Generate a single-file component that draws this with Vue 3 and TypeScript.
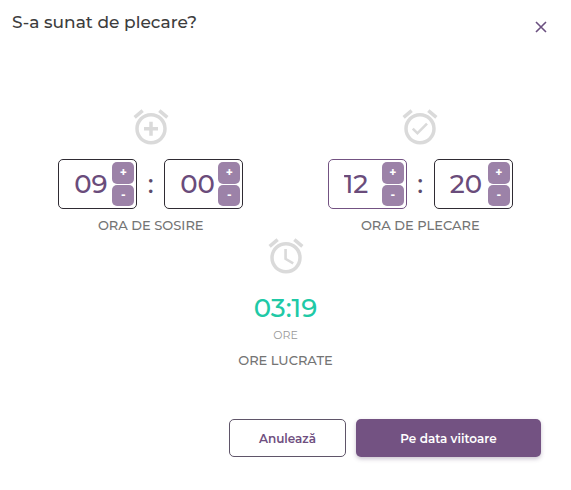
<script setup lang="ts">
import { computed, reactive, ref } from 'vue'

interface TimeGroup {
  id: string
  label: string
  icon: 'add' | 'check'
  fields: { id: string; name: string; value: string; max: number; active: boolean }[]
}

const open = ref(true)

const groups = reactive<TimeGroup[]>([
  {
    id: 'arrival',
    label: 'ORA DE SOSIRE',
    icon: 'add',
    fields: [
      { id: 'arrival-hour', name: 'Ora de sosire, ore', value: '09', max: 24, active: false },
      { id: 'arrival-minute', name: 'Ora de sosire, minute', value: '00', max: 60, active: false },
    ],
  },
  {
    id: 'departure',
    label: 'ORA DE PLECARE',
    icon: 'check',
    fields: [
      { id: 'departure-hour', name: 'Ora de plecare, ore', value: '12', max: 24, active: true },
      { id: 'departure-minute', name: 'Ora de plecare, minute', value: '20', max: 60, active: false },
    ],
  },
])

const arrivalSeconds = 30

const pad = (n: number): string => String(n).padStart(2, '0')

function step(field: TimeGroup['fields'][number], delta: number): void {
  field.value = pad(((Number(field.value) || 0) + delta + field.max) % field.max)
}

function minutesOf(group: TimeGroup): number {
  return (Number(group.fields[0].value) || 0) * 60 + (Number(group.fields[1].value) || 0)
}

const worked = computed(() => {
  const seconds = (minutesOf(groups[1]) - minutesOf(groups[0])) * 60 - arrivalSeconds
  const minutes = Math.max(0, Math.floor(seconds / 60))
  return `${pad(Math.floor(minutes / 60))}:${pad(minutes % 60)}`
})
</script>

<template>
  <form v-if="open" class="dialog" @submit.prevent="open = false">
    <header class="head">
      <h1 class="title">S-a sunat de plecare?</h1>
      <button class="close" type="button" aria-label="Închide" @click="open = false">
        <svg viewBox="0 0 12 12" aria-hidden="true"><path d="M1 1l10 10M11 1L1 11" /></svg>
      </button>
    </header>

    <main class="body">
      <div class="times">
        <section v-for="group in groups" :key="group.id" class="group">
          <svg class="alarm" viewBox="0 0 24 24" aria-hidden="true">
            <path d="M7.88 3.39L6.6 1.86 2 5.71l1.29 1.53 4.59-3.85zM22 5.72l-4.6-3.86-1.29 1.53 4.6 3.86L22 5.72zM12 4c-4.97 0-9 4.03-9 9s4.02 9 9 9a9 9 0 0 0 0-18zm0 16c-3.87 0-7-3.13-7-7s3.13-7 7-7 7 3.13 7 7-3.13 7-7 7z" />
            <path v-if="group.icon === 'add'" d="M13 9h-2v3H8v2h3v3h2v-3h3v-2h-3V9z" />
            <path v-else d="M10.54 14.53L8.41 12.4l-1.06 1.06 3.18 3.18 6-6-1.06-1.06-4.93 4.95z" />
          </svg>
          <div class="fields">
            <template v-for="(field, i) in group.fields" :key="field.id">
              <span v-if="i" class="colon">:</span>
              <div class="field" :class="{ active: field.active }">
                <input
                  :id="field.id"
                  v-model="field.value"
                  class="value"
                  type="text"
                  inputmode="numeric"
                  maxlength="2"
                  :aria-label="field.name"
                />
                <div class="steps">
                  <button type="button" class="step" @click="step(field, 1)">+</button>
                  <button type="button" class="step" @click="step(field, -1)">-</button>
                </div>
              </div>
            </template>
          </div>
          <p class="label">{{ group.label }}</p>
        </section>
      </div>

      <section class="group total">
        <svg class="alarm" viewBox="0 0 24 24" aria-hidden="true">
          <path d="M22 5.72l-4.6-3.86-1.29 1.53 4.6 3.86L22 5.72zM7.88 3.39L6.6 1.86 2 5.71l1.29 1.53 4.59-3.85zM12.5 8H11v6l4.75 2.85.75-1.23-4-2.37V8zM12 4c-4.97 0-9 4.03-9 9s4.02 9 9 9a9 9 0 0 0 0-18zm0 16c-3.87 0-7-3.13-7-7s3.13-7 7-7 7 3.13 7 7-3.13 7-7 7z" />
        </svg>
        <output class="worked">{{ worked }}</output>
        <span class="unit">ORE</span>
        <p class="label">ORE LUCRATE</p>
      </section>
    </main>

    <footer class="foot">
      <button class="btn outline" type="button" @click="open = false">Anulează</button>
      <button class="btn solid" type="submit">Pe data viitoare</button>
    </footer>
  </form>
</template>

<style>
body {
  margin: 0;
  background: #fff;
}
</style>

<style scoped>
.dialog {
  box-sizing: border-box;
  padding: 8px 16px 32px 12px;
  font-family: Montserrat, Inter, sans-serif;
  color: #3d3d3d;
}

button {
  margin: 0;
  font-family: inherit;
  cursor: pointer;
}

.head {
  display: flex;
  justify-content: space-between;
  align-items: flex-start;
}

.title {
  margin: 0;
  font-size: 17px;
  line-height: 28px;
  font-weight: 500;
}

.close {
  display: flex;
  margin-top: 8px;
  padding: 5px 8px;
  border: 0;
  background: none;
}

.close svg {
  width: 12px;
  height: 12px;
  fill: none;
  stroke: #6b5080;
  stroke-width: 1.6;
}

.body {
  padding: 68px 0 0 4px;
}

.times {
  display: grid;
  grid-template-columns: 1fr 1fr;
}

.group {
  display: flex;
  flex-direction: column;
  align-items: center;
}

.alarm {
  width: 42px;
  height: 42px;
  fill: #dadada;
}

.fields {
  display: flex;
  align-items: center;
  margin-top: 11px;
}

.field {
  box-sizing: border-box;
  display: flex;
  justify-content: space-between;
  width: 79px;
  height: 50px;
  padding: 2px 2px 2px 15px;
  border: 1px solid #2f2b33;
  border-radius: 5px;
}

.field.active {
  border-color: #735282;
}

.value {
  width: 36px;
  min-width: 0;
  padding: 0;
  border: 0;
  outline: 0;
  background: none;
  font-family: inherit;
  font-size: 26px;
  font-weight: 500;
  color: #6a4c7b;
}

.steps {
  display: grid;
  gap: 1px;
  width: 22px;
}

.step {
  padding: 0;
  border: 0;
  border-radius: 5px;
  background: #9c82a8;
  color: #fff;
  font-size: 12px;
  line-height: 20px;
  font-weight: 700;
}

.colon {
  width: 27px;
  text-align: center;
  font-size: 26px;
  line-height: 32px;
  font-weight: 500;
  color: #5d4a6b;
}

.label {
  margin: 6px 0 0;
  font-size: 13px;
  line-height: 20px;
  font-weight: 500;
  color: #747474;
}

.worked {
  margin-top: 13px;
  font-size: 26px;
  line-height: 36px;
  font-weight: 500;
  color: #20c9a6;
}

.unit {
  font-size: 11px;
  line-height: 18px;
  color: #999;
}

.foot {
  display: flex;
  justify-content: flex-end;
  gap: 10px;
  padding: 49px 14px 0 0;
}

.btn {
  box-sizing: border-box;
  height: 38px;
  border-radius: 5px;
  font-size: 12px;
  font-weight: 600;
}

.outline {
  width: 117px;
  border: 1px solid #5f5569;
  background: #fff;
  color: #6f4f80;
}

.solid {
  width: 185px;
  border: 0;
  background: #735282;
  color: #fff;
  box-shadow: 0 2px 4px rgba(80, 60, 95, 0.3);
}
</style>
